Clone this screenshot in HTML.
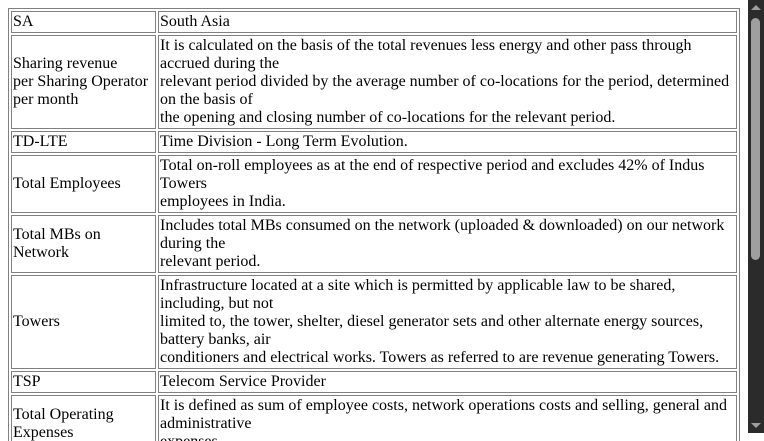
<!DOCTYPE html>
<html><head><style>
html,body{margin:0;overflow:hidden;height:433px;background:#fff}
body{padding:8px 24px 0 8px;width:732px;box-sizing:content-box;font-family:"Liberation Serif",serif;font-size:16px;line-height:normal}
table{width:732px;border:1px solid #808080;border-spacing:2px}
td{border:1px solid #808080;padding:1px;vertical-align:middle;text-align:left}
td:first-child{width:141px}
.sb{position:fixed;right:0;top:0;width:16px;height:433px;background:#2b2b2b}
.th{position:absolute;left:3px;top:18px;width:9px;height:242px;background:#9f9f9f;border-radius:5px}
.up,.dn{position:absolute;left:3px;width:0;height:0;border-left:5px solid transparent;border-right:5px solid transparent}
.up{top:5px;border-bottom:5px solid #9f9f9f}
.dn{bottom:5px;border-top:5px solid #9f9f9f}
</style></head><body>
<table>
<tr><td>SA</td><td>South Asia</td></tr>
<tr><td>Sharing revenue<br>per Sharing Operator<br>per month</td><td>It is calculated on the basis of the total revenues less energy and other pass through accrued during the<br>relevant period divided by the average number of co-locations for the period, determined on the basis of<br>the opening and closing number of co-locations for the relevant period.</td></tr>
<tr><td>TD-LTE</td><td>Time Division - Long Term Evolution.</td></tr>
<tr><td>Total Employees</td><td>Total on-roll employees as at the end of respective period and excludes 42% of Indus Towers<br>employees in India.</td></tr>
<tr><td>Total MBs on<br>Network</td><td>Includes total MBs consumed on the network (uploaded &amp; downloaded) on our network during the<br>relevant period.</td></tr>
<tr><td>Towers</td><td>Infrastructure located at a site which is permitted by applicable law to be shared, including, but not<br>limited to, the tower, shelter, diesel generator sets and other alternate energy sources, battery banks, air<br>conditioners and electrical works. Towers as referred to are revenue generating Towers.</td></tr>
<tr><td>TSP</td><td>Telecom Service Provider</td></tr>
<tr><td>Total Operating<br>Expenses</td><td>It is defined as sum of employee costs, network operations costs and selling, general and administrative<br>expenses.</td></tr>
</table>
<div class="sb"><div class="up"></div><div class="th"></div><div class="dn"></div></div>
</body></html>
